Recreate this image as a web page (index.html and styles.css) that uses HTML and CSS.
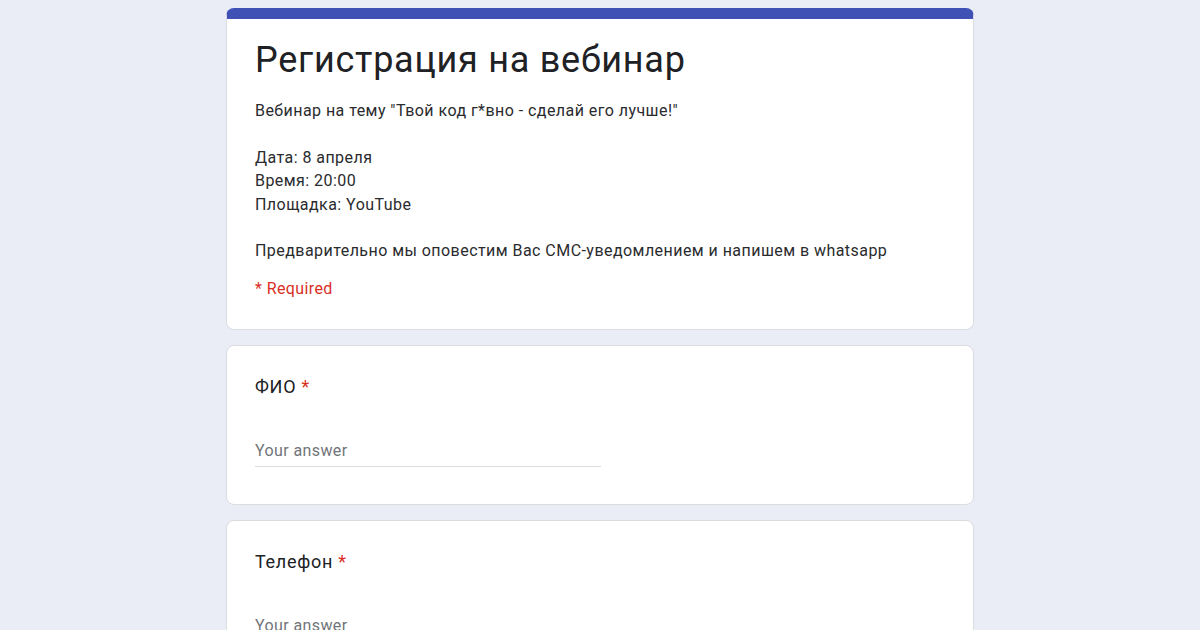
FILE: index.html
```html
<!DOCTYPE html>
<html lang="ru">
<head>
    <meta charset="UTF-8">
    <meta name="viewport" content="width=device-width, initial-scale=1.0">
    <title>Регистрация на вебинар</title>
    <link rel="stylesheet" href="styles.css">
</head>
<body>
    <div class="form-wrap">
        <!-- Шапка формы -->
        <div class="card card-head">
            <h1 class="form-title">Регистрация на вебинар</h1>
            <div class="form-desc">
                <p>Вебинар на тему "Твой код г*вно - сделай его лучше!"</p>
                <p>Дата: 8 апреля<br>Время: 20:00<br>Площадка: YouTube</p>
                <p>Предварительно мы оповестим Вас СМС-уведомлением и напишем в whatsapp</p>
            </div>
            <div class="required-note">* Required</div>
        </div>

        <!-- Вопросы -->
        <div class="card question">
            <div class="q-title">ФИО <span class="star">*</span></div>
            <div class="answer">Your answer</div>
        </div>

        <div class="card question">
            <div class="q-title">Телефон <span class="star">*</span></div>
            <div class="answer">Your answer</div>
        </div>
    </div>
</body>
</html>
```

FILE: styles.css
```css
body {
    margin: 0;
    background: #ebedf6;
    color: #202124;
    font-family: Roboto, "Liberation Sans", sans-serif;
    overflow: hidden;
}

.form-wrap {
    width: 748px;
    margin: 0 auto;
    padding-top: 8px;
    display: flex;
    flex-direction: column;
    gap: 15px;
}

.card {
    background: #fff;
    border: 1px solid #dadce0;
    border-radius: 8px;
    padding: 0 28px;
}

/* Шапка */
.card-head {
    border-top: 11px solid #3f51b5;
    padding-top: 18px;
    padding-bottom: 28px;
}

.form-title {
    margin: 0;
    font-size: 36px;
    font-weight: 400;
    line-height: 46px;
    letter-spacing: 0.75px;
}

.form-desc {
    margin-top: 16px;
    font-size: 16px;
    line-height: 23.4px;
    letter-spacing: 0.45px;
    color: #2a2b2e;
}

.form-desc p {
    margin: 0 0 23.4px;
}

.form-desc p:last-child {
    margin-bottom: 0;
}

.required-note {
    margin-top: 14px;
    color: #d93025;
    font-size: 16px;
    line-height: 24px;
    letter-spacing: 0.4px;
}

/* Вопросы */
.question {
    padding-top: 28px;
    padding-bottom: 37px;
}

.q-title {
    font-size: 18px;
    line-height: 26px;
    letter-spacing: 0.7px;
}

.star {
    color: #d93025;
}

.answer {
    width: 346px;
    margin-top: 40px;
    padding-bottom: 4px;
    border-bottom: 1px solid #dadce0;
    color: #70757a;
    font-size: 16px;
    line-height: 22px;
    letter-spacing: 0.4px;
}
```
